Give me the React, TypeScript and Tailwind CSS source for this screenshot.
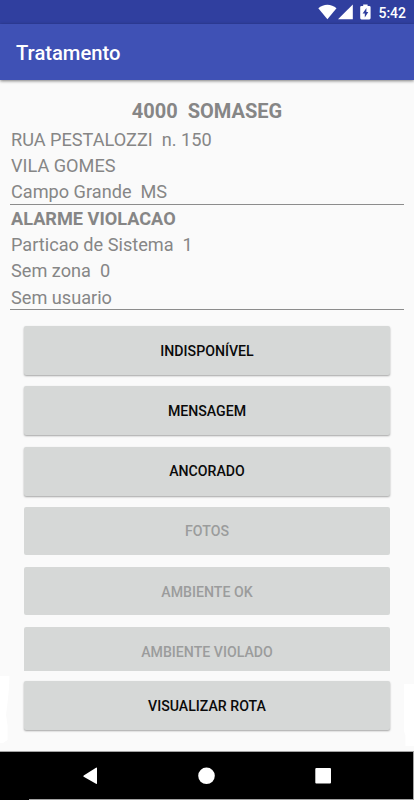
import clsx from "clsx";

const actions = [
  { label: "INDISPONÍVEL", enabled: true },
  { label: "MENSAGEM", enabled: true },
  { label: "ANCORADO", enabled: true },
  { label: "FOTOS", enabled: false },
  { label: "AMBIENTE OK", enabled: false },
  { label: "AMBIENTE VIOLADO", enabled: false },
];

function ActionButton({ label, enabled }: { label: string; enabled: boolean }) {
  return (
    <button
      disabled={!enabled}
      className={clsx(
        "flex w-full shrink-0 items-center justify-center rounded-[2px] bg-[#d6d8d7] pt-[2px] text-[14.15px] font-medium",
        enabled
          ? "h-[49px] text-[#0a0a0a] shadow-[0_1px_2px_rgba(0,0,0,0.35)]"
          : "h-[48px] text-[#9b9c9c]"
      )}
    >
      {label}
    </button>
  );
}

function StatusBar() {
  return (
    <div className="flex h-6 items-center justify-end bg-[#303f9f] pr-2 text-white">
      <svg width="68" height="24" viewBox="0 0 68 24" fill="currentColor">
        {/* wifi */}
        <path d="M0.3 8.3C5.4 3.4 13.4 3.4 18.5 8.3L9.4 19.2Z" />
        {/* signal */}
        <path d="M20 19.3H34.8V4.5Z" />
        {/* battery */}
        <path
          fillRule="evenodd"
          d="M45.2 4.6H49.6V6H51.3Q52.6 6 52.6 7.3V18.1Q52.6 19.4 51.3 19.4H43.5Q42.2 19.4 42.2 18.1V7.3Q42.2 6 43.5 6H45.2ZM48.4 8L44.6 13.4H46.8V17.6L50.3 12H48.4Z"
        />
      </svg>
      <span className="ml-[-8px] pt-px text-[14px] leading-6 font-medium">5:42</span>
    </div>
  );
}

export default function App() {
  return (
    <div className="relative flex h-[800px] w-[414px] flex-col overflow-hidden bg-[#fafafa] font-['Roboto',sans-serif]">
      <StatusBar />

      <header className="z-10 flex h-14 items-center bg-[#3f51b5] px-4 shadow-[0_1px_3px_rgba(0,0,0,0.5)]">
        <h1 className="pt-[2px] text-[20.2px] font-medium text-white">Tratamento</h1>
      </header>

      {/* Client and event */}
      <section className="mx-[10px] mt-[17px] text-[18.15px] leading-[26.2px] whitespace-pre text-[#868686]">
        <h2 className="h-[28px] pt-px text-center text-[20px] font-bold">4000  SOMASEG</h2>
        <div className="h-[80px] border-b border-[#8c8c8c] pt-[1.6px] pl-px">
          <p>RUA PESTALOZZI  n. 150</p>
          <p>VILA GOMES</p>
          <p>Campo Grande  MS</p>
        </div>
        <div className="h-[105px] border-b border-[#8c8c8c] pt-px pl-px">
          <p className="font-bold">ALARME VIOLACAO</p>
          <p>Particao de Sistema  1</p>
          <p>Sem zona  0</p>
          <p>Sem usuario</p>
        </div>
      </section>

      <div className="mt-[11px] h-[350px] overflow-hidden px-6 pt-[5px]">
        {actions.map((action) => (
          <div key={action.label} className="h-[60.3px]">
            <ActionButton {...action} />
          </div>
        ))}
      </div>
      <div className="mt-[10px] px-6">
        <ActionButton label="VISUALIZAR ROTA" enabled />
      </div>

      <nav className="mt-auto flex h-[49px] border-t border-[#a3a3a3] bg-black">
        <svg width="414" height="48" viewBox="0 0 414 48" fill="white">
          <path d="M97 16.2V31.2Q97 32.4 96 31.8L83.7 24.7Q82.8 24 83.7 23.4L96 15.7Q97 15.2 97 16.2Z" />
          <circle cx="206.5" cy="23.8" r="8.3" />
          <rect x="315.3" y="16" width="15.7" height="15.6" rx="1" />
          <path d="M29 47H414V48H29ZM413 0H414V48H413Z" fill="#a3a3a3" />
        </svg>
      </nav>

      {/* Light patches at the screen edges */}
      <svg className="pointer-events-none absolute bottom-[53px] left-0" width="414" height="72" viewBox="0 0 414 72" fill="white">
        <path d="M0 1H9.5L9 13L7.5 28L6 40L7.5 50V65L3 68H0Z" />
        <path d="M404 9H414V71H405.5V61L404 56Z" />
      </svg>
    </div>
  );
}
